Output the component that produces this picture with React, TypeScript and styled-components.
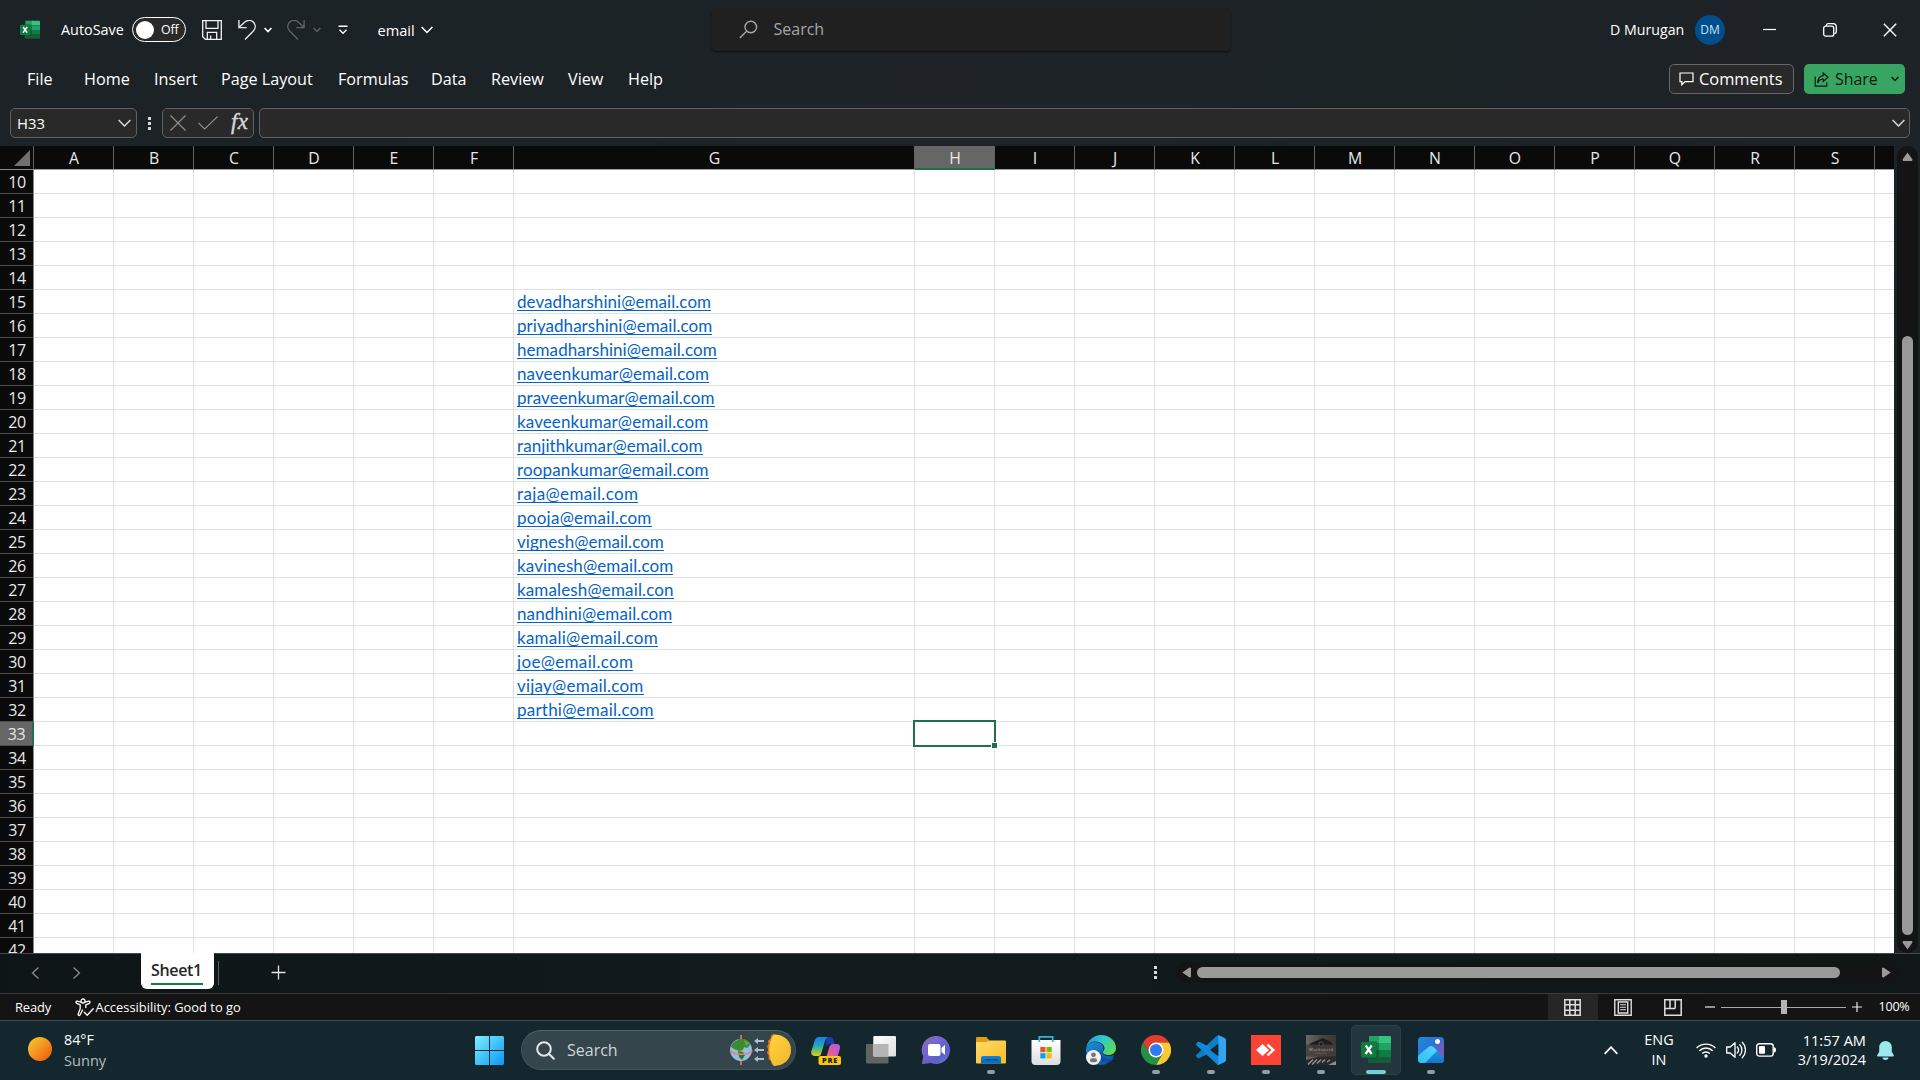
import React from "react";
import styled, { createGlobalStyle, css } from "styled-components";

const UI = `"Open Sans", "Noto Sans", sans-serif`;

const GlobalStyle = createGlobalStyle`
  * { box-sizing: border-box; }
  body { margin: 0; background: #1b2225; overflow: hidden; font-family: ${UI}; }
  svg { display: block; flex: none; }
`;

const Screen = styled.div`
  width: 1920px;
  height: 1080px;
  display: flex;
  flex-direction: column;
  overflow: hidden;
  background: linear-gradient(100deg, #1c2225 0%, #1b2326 28%, #1f2328 45%, #1b2325 68%, #1e2227 82%, #1b2325 100%);
`;

const Label = styled.span<{ $size?: number; $color?: string; $ls?: number; $weight?: number }>`
  font-size: ${(p) => p.$size ?? 14.4}px;
  color: ${(p) => p.$color ?? "#fff"};
  letter-spacing: ${(p) => p.$ls ?? 0}px;
  font-weight: ${(p) => p.$weight ?? 400};
  line-height: 20px;
  white-space: nowrap;
`;

/* Holds one control of a bar: fixed width, with the gap before it */
const Slot = styled.div<{ $w: number; $gap?: number; $center?: boolean }>`
  flex: none;
  width: ${(p) => p.$w}px;
  margin-left: ${(p) => p.$gap ?? 0}px;
  display: flex;
  align-items: center;
  justify-content: ${(p) => (p.$center ? "center" : "flex-start")};
`;

/* ---------- Title bar ---------- */
const TitleBar = styled.header`
  height: 60px;
  flex: none;
  display: flex;
  align-items: center;
  padding-left: 20px;
`;
const Toggle = styled.div`
  width: 54px;
  height: 25px;
  margin-bottom: 1px;
  border: 1px solid #fff;
  border-radius: 13px;
  background: #292929;
  display: flex;
  align-items: center;
  gap: 7px;
  padding-left: 3px;
`;
const Knob = styled.i`
  width: 18px;
  height: 18px;
  border-radius: 50%;
  background: #fff;
`;
const SearchBox = styled.div`
  width: 518px;
  height: 42px;
  margin-left: 279px;
  border-radius: 4px;
  background: #202020;
  box-shadow: 0 1px 2px #0b0f10;
  display: flex;
  align-items: center;
  padding: 0 0 2px 27px;
  gap: 16px;
`;
const Avatar = styled.div`
  width: 30px;
  height: 30px;
  border-radius: 50%;
  background: #004e8c;
  display: grid;
  place-items: center;
`;

/* ---------- Ribbon tabs ---------- */
const TabRow = styled.nav`
  height: 48px;
  flex: none;
  display: flex;
  padding-left: 27px;
`;
const Tab = styled.div<{ $w: number }>`
  width: ${(p) => p.$w}px;
  height: 40px;
  padding-top: 8px;
`;
const Actions = styled.div`
  margin-left: auto;
  padding: 4px 15px 0 0;
  display: flex;
  gap: 10px;
`;
const ActionButton = styled.div<{ $primary?: boolean }>`
  height: 30px;
  border-radius: 5px;
  display: flex;
  align-items: center;
  ${(p) =>
    p.$primary
      ? css`
          width: 101px;
          background: #38a662;
          padding-left: 10px;
          gap: 6px;
        `
      : css`
          width: 125px;
          background: #292929;
          border: 1px solid #666;
          padding-left: 9px;
          gap: 5px;
        `}
`;

/* ---------- Formula bar ---------- */
const FormulaRow = styled.div`
  height: 38px;
  flex: none;
  display: flex;
  align-items: flex-start;
  padding-left: 10px;
`;
const Field = styled.div<{ $w: number; $gap?: number }>`
  width: ${(p) => p.$w}px;
  height: 30px;
  margin-left: ${(p) => p.$gap ?? 0}px;
  border: 1px solid #616161;
  border-radius: 5px;
  background: #292929;
  display: flex;
  align-items: center;
`;
const DotsSlot = styled.div`
  width: 25px;
  height: 31px;
  display: grid;
  place-items: center;
`;
const Dots = styled.div`
  width: 3px;
  display: flex;
  flex-direction: column;
  gap: 2px;
`;
const Dot = styled.i`
  width: 3px;
  height: 3px;
  background: #d8d8d8;
`;
const FxMark = styled.span`
  font: italic 400 23px/24px "Liberation Serif", serif;
  -webkit-text-stroke: 0.4px #d6d6d6;
  letter-spacing: 0.4px;
  color: #d6d6d6;
  padding-bottom: 2px;
`;

/* ---------- Worksheet ---------- */
const SheetArea = styled.main`
  height: 807px;
  flex: none;
  display: flex;
`;
const Grid = styled.div`
  position: relative;
  width: 1894px;
  height: 807px;
  overflow: hidden;
  background: #fff;
`;
const GridRow = styled.div<{ $h: number }>`
  display: flex;
  width: 2000px;
  height: ${(p) => p.$h}px;
`;
const Corner = styled.div`
  width: 34px;
  height: 24px;
  background: #0a0a0a;
  border-right: 1px solid #616161;
  border-bottom: 1px solid #8a8a8a;
  display: flex;
  padding: 4px 0 0 14px;
`;
const ColHead = styled.div<{ $w: number; $on?: boolean }>`
  flex: none;
  width: ${(p) => p.$w}px;
  padding-left: 1px;
  background: ${(p) => (p.$on ? "#666" : "#0a0a0a")};
  border-right: 1px solid #616161;
  border-bottom: ${(p) => (p.$on ? "2px solid #1e7145" : "1px solid #a0a0a0")};
  color: #e8e8e8;
  font-size: 15.8px;
  line-height: 24px;
  text-align: center;
`;
const RowHead = styled.div<{ $on?: boolean }>`
  flex: none;
  width: 34px;
  background: ${(p) => (p.$on ? "#666" : "#0a0a0a")};
  border-right: ${(p) => (p.$on ? "2px solid #1e7145" : "1px solid #8a8a8a")};
  border-bottom: 1px solid #4d4d4d;
  padding-left: 1px;
  color: #e8e8e8;
  font-size: 16px;
  letter-spacing: -0.3px;
  line-height: 24px;
  text-align: center;
`;
const Cell = styled.div<{ $w: number }>`
  flex: none;
  width: ${(p) => p.$w}px;
  border-right: 1px solid #e0e0e0;
  border-bottom: 1px solid #e0e0e0;
  padding-left: 3px;
`;
const Mail = styled.div<{ $ls: number }>`
  width: fit-content;
  height: 21px;
  border-bottom: 1px solid #0563c1;
  color: #0563c1;
  font: 400 17px/24px Lato, sans-serif;
  letter-spacing: ${(p) => p.$ls}px;
  white-space: nowrap;
`;
/* Selection frame over the active cell */
const Selection = styled.div`
  position: absolute;
  left: 913px;
  top: 574px;
  width: 83px;
  height: 27px;
  border: 2px solid #1e7145;
`;
const FillHandle = styled.i`
  position: absolute;
  right: -4px;
  bottom: -4px;
  width: 7px;
  height: 7px;
  border: 1px solid #fff;
  background: #1e7145;
`;
const VScroll = styled.div`
  width: 21px;
  height: 807px;
  margin-left: 3px;
  border-radius: 10px;
  background: #141414;
  display: flex;
  flex-direction: column;
  align-items: center;
  padding-top: 6px;
`;
const VThumb = styled.div`
  width: 11px;
  height: 599px;
  margin: 175px 0 6px;
  border-radius: 6px;
  background: #999;
`;

/* ---------- Sheet tabs ---------- */
const SheetBar = styled.div`
  height: 41px;
  flex: none;
  border-top: 1px solid #484848;
  border-bottom: 1px solid #3a3a3a;
  background: linear-gradient(90deg, #0d1517, #111a1c 40%, #10191b 75%, #101716);
  display: flex;
  align-items: center;
  padding: 0 0 2px 30px;
`;
const SheetTab = styled.div`
  width: 73px;
  height: 36px;
  margin: -1px 0 0 60px;
  align-self: flex-start;
  border-radius: 0 0 6px 6px;
  background: #fff;
  padding: 5px 10px 0;
`;
const SheetName = styled.div`
  width: 52px;
  height: 27px;
  border-bottom: 2px solid #107c41;
  color: #262626;
  font-size: 16px;
  font-weight: 600;
  letter-spacing: -0.35px;
  line-height: 24px;
  white-space: nowrap;
`;
const TabDivider = styled.i`
  width: 1px;
  height: 24px;
  margin-left: 4px;
  background: #5a5a5a;
`;
const HScroll = styled.div`
  width: 722px;
  height: 21px;
  margin-left: 18px;
  border-radius: 10px;
  background: #141414;
  display: flex;
  align-items: center;
  padding-left: 6px;
`;
const HThumb = styled.div`
  width: 643px;
  height: 11px;
  margin: 0 42px 0 6px;
  border-radius: 6px;
  background: #999;
`;

/* ---------- Status bar ---------- */
const StatusBar = styled.div`
  height: 26px;
  flex: none;
  background: #141414;
  display: flex;
  align-items: center;
  padding-left: 15px;
`;
const ViewButton = styled.div<{ $on?: boolean }>`
  width: 50px;
  height: 26px;
  display: grid;
  place-items: center;
  background: ${(p) => (p.$on ? "#262626" : "transparent")};
`;
const ZoomTrack = styled.div`
  width: 125px;
  height: 14px;
  margin: 0 6px;
  display: flex;
  justify-content: center;
  background: linear-gradient(#a8a8a8, #a8a8a8) 0 7px / 100% 1px no-repeat;
`;
const ZoomThumb = styled.i`
  width: 6px;
  height: 14px;
  background: #b3b3b3;
`;

/* ---------- Taskbar ---------- */
const Taskbar = styled.footer`
  height: 60px;
  flex: none;
  border-top: 1px solid #3b4a50;
  background: #14272e;
  display: flex;
  align-items: center;
  padding-bottom: 1px;
`;
const Sun = styled.i`
  width: 24px;
  height: 24px;
  margin-left: 28px;
  margin-bottom: 2px;
  border-radius: 50%;
  background: linear-gradient(135deg, #f2c530 5%, #f39a22 45%, #ee6010 90%);
`;
const TwoLines = styled.div<{ $w: number; $gap: number; $align?: string }>`
  width: ${(p) => p.$w}px;
  margin-left: ${(p) => p.$gap}px;
  padding-bottom: 1px;
  display: flex;
  flex-direction: column;
  align-items: ${(p) => p.$align ?? "flex-start"};
`;
const TaskSearch = styled.div`
  width: 275px;
  height: 40px;
  margin-left: 17px;
  border: 1px solid #43545a;
  border-top-color: #54656a;
  border-radius: 20px;
  background: #34464c;
  display: flex;
  align-items: center;
  padding-left: 14px;
`;
const AppRow = styled.div`
  display: flex;
  gap: 5px;
  margin-left: 5px;
`;
const AppSlot = styled.div<{ $active?: boolean }>`
  width: 50px;
  height: 50px;
  border-radius: 5px;
  display: flex;
  flex-direction: column;
  align-items: center;
  padding-top: 10px;
  background: ${(p) => (p.$active ? "#24363d" : "transparent")};
  box-shadow: ${(p) => (p.$active ? "inset 0 0 0 1px #2e4047" : "none")};
`;
const Indicator = styled.i<{ $active?: boolean }>`
  width: ${(p) => (p.$active ? 20 : 8)}px;
  height: 4px;
  margin-top: 5px;
  border-radius: 2px;
  background: ${(p) => (p.$active ? "#6fd0d9" : "#959da0")};
`;

/* ---------- Icons ---------- */
const Chevron = ({ w = 12, color = "#fff", sw = 1.3, up = false }: { w?: number; color?: string; sw?: number; up?: boolean }) => (
  <svg width={w} height={w / 2 + 2} viewBox={`0 0 ${w} ${w / 2 + 2}`} fill="none" stroke={color} strokeWidth={sw}>
    <path d={up ? `M.6 ${w / 2 + 0.8}L${w / 2} 1.2L${w - 0.6} ${w / 2 + 0.8}` : `M.6 1L${w / 2} ${w / 2 + 0.5}L${w - 0.6} 1`} />
  </svg>
);

const ExcelIcon = ({ size = 30 }: { size?: number }) => (
  <svg width={size} height={size} viewBox="0 0 30 30">
    <path d="M8 1h11v7H8z" fill="#21a366" />
    <path d="M18 1h11a1 1 0 0 1 1 1v6H18z" fill="#33c481" />
    <path d="M7 8h11v7H7z" fill="#107c41" />
    <path d="M18 8h12v7H18z" fill="#21a366" />
    <path d="M7 15h11v7H7z" fill="#185c37" />
    <path d="M18 15h12v7H18z" fill="#107c41" />
    <path d="M7 22h23v5a1 1 0 0 1-1 1H8a1 1 0 0 1-1-1z" fill="#185c37" />
    <path d="M7 6h9v18H7z" fill="#0b4a28" opacity=".35" />
    <rect x="0" y="7" width="15.5" height="15.500" rx="1.4" fill="#107c41" />
    <path d="M4.700 10.500l6 8.500M10.700 10.500l-6.200 8.500" stroke="#fff" strokeWidth="2.2" fill="none" />
  </svg>
);

const SaveIcon = () => (
  <svg width="20" height="20" viewBox="0 0 20 20" fill="none" stroke="#f2f2f2" strokeWidth="1.3">
    <path d="M.7.7h18.6v18.6H3.4L.7 16.8z" />
    <path d="M4 .7v7.6h12V.7M5.3 19v-6.6h9.4V19M8.6 19v-3.6" />
  </svg>
);
const UndoIcon = ({ color, flip }: { color: string; flip?: boolean }) => (
  <svg width="19" height="20" viewBox="0 0 19 20" fill="none" stroke={color} strokeWidth="1.4">
    <path transform={flip ? "matrix(-1 0 0 1 19 0)" : undefined} d="M.9 0v7.6h7.8M1.2 7.3l5.6-5.2a6.2 6.2 0 0 1 9.1.6 6.2 6.2 0 0 1-.3 8L7 19.4" />
  </svg>
);

const CopilotIcon = () => (
  <svg width="30" height="30" viewBox="0 0 30 30">
    <defs>
      <linearGradient id="cp1" x1="0" y1="0" x2="0" y2="1">
        <stop offset="0" stopColor="#1b7fe0" />
        <stop offset=".45" stopColor="#22a6c8" />
        <stop offset=".75" stopColor="#7cc255" />
        <stop offset="1" stopColor="#f2c51a" />
      </linearGradient>
      <linearGradient id="cp2" x1="1" y1="0" x2="0" y2="1">
        <stop offset="0" stopColor="#a65ae8" />
        <stop offset=".5" stopColor="#e55a9e" />
        <stop offset="1" stopColor="#fb8b4a" />
      </linearGradient>
    </defs>
    <path d="M15 2h4c2 0 3 1.2 3.600 3.400L23.500 9H19c-2 0-3 1-3.600 3z" fill="#173fae" />
    <path d="M8 2h9c-1.800.7-2.400 2-3 4l-4 13c-.5 1.700-1.600 2-3 2H4c-3 0-4.400-2-3.600-5L3.600 6C4.400 3.300 5.600 2 8 2z" fill="url(#cp1)" />
    <path d="M22 9h3.500c3 0 4.100 2 3.300 5l-2.400 8c-.8 2.600-2.400 4-5 4H12c2-.5 2.800-2 3.400-4l3-10c.6-2 1.600-3 3.600-3z" fill="url(#cp2)" />
    <rect x="7.500" y="21" width="22.500" height="9" rx="2" fill="#fdc70c" />
    <text x="19.100" y="28.300" fontSize="7.400" fontWeight="800" fontFamily={UI} letterSpacing=".9" textAnchor="middle" fill="#1a1a1a">PRE</text>
  </svg>
);
const TaskViewIcon = () => (
  <svg width="30" height="30" viewBox="0 0 30 30">
    <defs>
      <linearGradient id="tv" x1="0" y1="0" x2="1" y2="1"><stop offset="0" stopColor="#fff" /><stop offset="1" stopColor="#dedede" /></linearGradient>
    </defs>
    <rect x="0" y="9" width="22.500" height="19.500" rx="1" fill="#626463" />
    <rect x="7.300" y="1" width="22.700" height="20.500" rx="1" fill="url(#tv)" />
    <path d="M7.300 9h15.200v12.500H8.300a1 1 0 0 1-1-1z" fill="#b5b5b5" />
  </svg>
);
const ChatIcon = () => (
  <svg width="30" height="30" viewBox="0 0 30 30">
    <defs>
      <linearGradient id="ch" x1="0" y1="0" x2="1" y2="1"><stop offset="0" stopColor="#a06a9e" /><stop offset=".35" stopColor="#7068cf" /><stop offset=".7" stopColor="#5b5fc7" /><stop offset="1" stopColor="#6f78e0" /></linearGradient>
    </defs>
    <path d="M15 1a14 14 0 1 1-5.200 27L2 29c-.8.100-1.200-.4-1-1.200l1.300-6.200A14 14 0 0 1 15 1z" fill="url(#ch)" />
    <rect x="7" y="9" width="12.500" height="12" rx="2" fill="#fff" />
    <path d="M20.500 13l3.500-3v10l-3.500-3z" fill="#fff" />
  </svg>
);
const FolderIcon = () => (
  <svg width="30" height="30" viewBox="0 0 30 30">
    <defs>
      <linearGradient id="fo" x1="0" y1="0" x2="1" y2="1"><stop offset="0" stopColor="#ffdc6c" /><stop offset="1" stopColor="#f9bb20" /></linearGradient>
      <linearGradient id="fb" x1="0" y1="0" x2="0" y2="1"><stop offset="0" stopColor="#1583dc" /><stop offset="1" stopColor="#0a68b8" /></linearGradient>
    </defs>
    <path d="M0 3.200C0 2.500.5 2 1.200 2h9.200l3 3.600L10 8H0z" fill="#e09d10" />
    <path d="M0 7h10l3.500-1.600H29a1 1 0 0 1 1 1V27.500a1 1 0 0 1-1 1H1a1 1 0 0 1-1-1z" fill="url(#fo)" />
    <path d="M5 28.500v-5.300c0-1.400.8-2.200 2.200-2.200h15.600c1.400 0 2.200.8 2.200 2.200v5.300z" fill="url(#fb)" />
    <path d="M8.500 24.800h13" stroke="#074a8c" strokeWidth="1.200" />
  </svg>
);
const StoreIcon = () => (
  <svg width="30" height="30" viewBox="0 0 30 30">
    <defs><linearGradient id="st" x1="0" y1="0" x2="0" y2="1"><stop offset="0" stopColor="#fff" /><stop offset="1" stopColor="#dcdedf" /></linearGradient></defs>
    <path d="M.500 5h29v21a4 4 0 0 1-4 4h-21a4 4 0 0 1-4-4z" fill="url(#st)" />
    <path d="M8.300 7V1.800h13.400V7" fill="none" stroke="#2fb3e8" strokeWidth="1.700" />
    <path d="M9.300 12h5.200v5.200H9.300z" fill="#f25022" /><path d="M15.500 12h5.200v5.200h-5.200z" fill="#7fba00" />
    <path d="M9.300 18.200h5.200v5.200H9.300z" fill="#00a4ef" /><path d="M15.500 18.200h5.200v5.200h-5.200z" fill="#ffb900" />
  </svg>
);
const EdgeIcon = () => (
  <svg width="30" height="30" viewBox="0 0 30 30">
    <defs>
      <linearGradient id="ed1" x1="0" y1=".2" x2="1" y2=".6"><stop offset="0" stopColor="#1f97dc" /><stop offset=".45" stopColor="#33c3d4" /><stop offset="1" stopColor="#5ade52" /></linearGradient>
      <linearGradient id="ed2" x1="0" y1="0" x2="1" y2="1"><stop offset="0" stopColor="#1b8fd8" /><stop offset="1" stopColor="#0c4f9c" /></linearGradient>
    </defs>
    <path d="M0 14c1-5 5-7 9-7 5 0 8.500 3 8.500 6 0 2-1.200 2.700-1.200 4.200 0 3.500 7 5.300 12 2.600C26 26 21 30 15 30 7 30-.5 24 0 14z" fill="url(#ed2)" />
    <path d="M10 15c-1 7 4 12.500 11 12.500 3 0 6-2 7.300-4.700-5 2.700-13 .7-13-5.200z" fill="#0d4ea3" />
    <path d="M.2 13C1.300 5.500 7.500 0 15 0c8.500 0 15 6 15 13 0 4.500-3.500 7-7.200 7-3.400 0-6-1.300-6-2.700 0-1 1.700-1.600 1.700-4C18.500 9.500 14 6.500 9.500 6.500 5 6.500 1.500 9 .2 13z" fill="url(#ed1)" />
    <circle cx="7.500" cy="22.500" r="7.500" fill="#f1f1f1" />
    <circle cx="7.500" cy="19.800" r="2.400" fill="#767676" /><rect x="4" y="23.200" width="7" height="4" rx="2" fill="#767676" />
  </svg>
);
const ChromeIcon = () => (
  <svg width="30" height="30" viewBox="0 0 30 30">
    <path d="M2 7.500A15 15 0 0 1 28 7.500H15L8.500 18.700z" fill="#e33b2e" />
    <path d="M28 7.500A15 15 0 0 1 15 30l6.500-11.300L15 7.500z" fill="#fcc934" />
    <path d="M2 7.500A15 15 0 0 0 15 30l6.500-11.300h-13z" fill="#229342" />
    <circle cx="15" cy="15" r="7.500" fill="#fff" /><circle cx="15" cy="15" r="6" fill="#2f7bed" />
  </svg>
);
const CodeIcon = () => (
  <svg width="30" height="30" viewBox="0 0 30 30">
    <path d="M22.500.3L28.500 3a2 2 0 0 1 1.300 2v5L3.600 23a1.600 1.600 0 0 1-2-.1L.4 21.600a1.300 1.300 0 0 1 0-1.900L21 .7z" fill="#0d7dc6" />
    <path d="M22.500 29.700l6-2.700a2 2 0 0 0 1.300-2v-5L3.600 7a1.600 1.600 0 0 0-2 .1L.4 8.400a1.300 1.300 0 0 0 0 1.900L21 29.300z" fill="#1289d6" />
    <path d="M22 0l6.600 3A2.300 2.300 0 0 1 30 5.100v19.800a2.300 2.300 0 0 1-1.400 2.100L22 30c-.9.300-1.500-.2-1.500-.2 1 .4 1.800-.3 1.800-1.300V1.500C22.300.5 21.500-.2 20.500.2c0 0 .6-.5 1.500-.2z" fill="#2fa5f3" />
    <path d="M22.300 8.800L13.900 15l8.400 6.200z" fill="#14272e" />
  </svg>
);
const AnyDeskIcon = () => (
  <svg width="30" height="30" viewBox="0 0 30 30">
    <rect width="30" height="30" fill="#fd4236" />
    <path d="M5 15l6.500-6 6.500 6-6.500 6z" fill="#fff" />
    <path d="M16.500 9.600l5.700 5.400-5.700 5.400" fill="none" stroke="#fff" strokeWidth="2.500" />
  </svg>
);
const PhotoTile = () => (
  <svg width="30" height="30" viewBox="0 0 30 30">
    <defs><linearGradient id="ph" x1="0" y1="0" x2="1" y2="0"><stop offset="0" stopColor="#6b6967" /><stop offset=".5" stopColor="#4a4644" /><stop offset="1" stopColor="#393635" /></linearGradient></defs>
    <rect width="30" height="30" fill="url(#ph)" />
    <path d="M3 9L17 3l8 4 2 3-6 2-12 2z" fill="#1f1e1e" />
    <rect y="9.500" width="30" height="12" fill="#453d3a" opacity=".8" />
    <circle cx="15" cy="9" r="2.200" fill="#1c1b1b" stroke="#777" strokeWidth=".6" />
    <text x="15.200" y="16.400" fontSize="4" fontFamily={UI} textAnchor="middle" letterSpacing=".5" fill="#b5afab">Workspaid</text>
    <path d="M9 18.200h12" stroke="#7a736f" strokeWidth=".5" />
    <path d="M0 30v-5l14-3.500h16V30z" fill="#2b2a2a" />
    <path d="M2 29.500l5-5M6 29.500l5-5M11 28.500l4-4M16 27.500l3-3M21 27l3-2" stroke="#969594" strokeWidth="1.300" />
    <path d="M22 30l8-4v4z" fill="#8d8b8a" />
  </svg>
);
const PhotosIcon = () => (
  <svg width="30" height="30" viewBox="0 0 30 30">
    <defs>
      <linearGradient id="pp1" x1="0" y1="0" x2="1" y2=".8"><stop offset="0" stopColor="#1c8ae0" /><stop offset=".5" stopColor="#2c73d2" /><stop offset="1" stopColor="#a04fb4" /></linearGradient>
      <linearGradient id="pp2" x1="0" y1="1" x2="1" y2="0"><stop offset="0" stopColor="#2fb9f0" /><stop offset="1" stopColor="#56d8fd" /></linearGradient>
      <linearGradient id="pp3" x1="0" y1="0" x2="0" y2="1"><stop offset="0" stopColor="#1ea0ec" /><stop offset="1" stopColor="#0f74cc" /></linearGradient>
      <clipPath id="ppc"><rect x="2" y="2" width="26" height="26" rx="3.500" /></clipPath>
    </defs>
    <g clipPath="url(#ppc)">
      <rect x="2" y="2" width="26" height="26" fill="url(#pp1)" />
      <path d="M12.500 12.300c1.500-1.400 3.500-1.400 5 0L29 23.500V29H3z" fill="url(#pp3)" />
      <path d="M0 22.500L12.500 12c1.600-1.300 3.400-1.300 5 .1l3.700 3.600L8 29H0z" fill="url(#pp2)" />
    </g>
    <circle cx="21.500" cy="6.600" r="2.500" fill="#f4f6ff" />
  </svg>
);
const EarthSun = () => (
  <svg width="64" height="34" viewBox="0 0 64 34">
    <defs><linearGradient id="sn" x1="0" y1="0" x2="1" y2="1"><stop offset="0" stopColor="#ffd640" /><stop offset="1" stopColor="#f0b429" /></linearGradient></defs>
    <path d="M12 2v30" stroke="#e8705a" strokeWidth="1.300" />
    <circle cx="12" cy="17" r="11" fill="#8fbfe6" />
    <path d="M7 8c4-3 8-3 12 0l2 4-3 3-3-1-1 3-4 1-5-2-3-2c0-2 2-5 5-6z" fill="#3f8a2c" />
    <path d="M9 18l5 1 2 3-3 5-3-3z" fill="#35751f" /><path d="M15 7l5 3-3 3z" fill="#64ac3c" />
    <path d="M1 17.500c4 5 18 5 22.500 0" fill="none" stroke="#e8836a" strokeWidth="1.500" />
    <path d="M12 2v4M12 28v4" stroke="#e8705a" strokeWidth="1.300" />
    <g fill="#a9bdd6">
      <path d="M25 8l4-3v2h6v2h-6v2zM25 17l4-3v2h6v2h-6v2zM25 26l4-3v2h6v2h-6v2z" />
    </g>
    <path d="M45 .5l-3 2.200-.5 3-2.500 2 .5 3L38 13.500l1.200 3L38 20l1.700 2.600L39.500 26l2.500 2 .8 3 3 2.500z" fill="#e9771d" />
    <path d="M45 1.500c10 0 17 6 17 15.500s-7 15.500-17 16c-3-4-4.700-9-4.700-15.500S42 5 45 1.500z" fill="url(#sn)" />
  </svg>
);

/* ---------- Data ---------- */
const tabs: [string, number][] = [
  ["File", 57], ["Home", 70], ["Insert", 67], ["Page Layout", 117], ["Formulas", 93],
  ["Data", 60], ["Review", 77], ["View", 60], ["Help", 50],
];
const columns: [string, number][] = "ABCDEFGHIJKLMNOPQRST".split("").map((c) => [c === "T" ? "" : c, c === "G" ? 401 : 80]);
const rows = Array.from({ length: 33 }, (_, i) => i + 10);
/* address and its tracking */
const mails: [string, number][] = [
  ["devadharshini@email.com", 0.06], ["priyadharshini@email.com", 0.04], ["hemadharshini@email.com", 0.06],
  ["naveenkumar@email.com", 0.11], ["praveenkumar@email.com", 0.08], ["kaveenkumar@email.com", 0.11],
  ["ranjithkumar@email.com", 0.08], ["roopankumar@email.com", 0.14], ["raja@email.com", 0.36],
  ["pooja@email.com", 0.26], ["vignesh@email.com", 0.03], ["kavinesh@email.com", 0.11],
  ["kamalesh@email.con", 0.14], ["nandhini@email.com", 0.11], ["kamali@email.com", 0.25],
  ["joe@email.com", 0.33], ["vijay@email.com", 0.22], ["parthi@email.com", 0.22],
];
const apps: { icon: React.ReactNode; running?: boolean; active?: boolean }[] = [
  { icon: <CopilotIcon /> },
  { icon: <TaskViewIcon /> },
  { icon: <ChatIcon /> },
  { icon: <FolderIcon />, running: true },
  { icon: <StoreIcon /> },
  { icon: <EdgeIcon /> },
  { icon: <ChromeIcon />, running: true },
  { icon: <CodeIcon />, running: true },
  { icon: <AnyDeskIcon />, running: true },
  { icon: <PhotoTile />, running: true },
  { icon: <ExcelIcon />, running: true, active: true },
  { icon: <PhotosIcon />, running: true },
];

const ThreeDots = () => (<Dots><Dot /><Dot /><Dot /></Dots>);

const GridCell = ({ col, row, w }: { col: string; row: number; w: number }) => {
  const mail = col === "G" ? mails[row - 15] : undefined;
  return <Cell $w={w}>{mail && <Mail $ls={mail[1]}>{mail[0]}</Mail>}</Cell>;
};

export default function App() {
  return (
    <Screen>
      <GlobalStyle />
      <TitleBar>
        <ExcelIcon size={20} />
        <Slot $w={71} $gap={21}><Label>AutoSave</Label></Slot>
        <Toggle><Knob /><Label $size={12.400} $ls={-0.1}>Off</Label></Toggle>
        <Slot $w={20} $gap={16}><SaveIcon /></Slot>
        <Slot $w={19} $gap={16}><UndoIcon color="#e6e6e6" /></Slot>
        <Slot $w={9} $gap={7}><Chevron w={8} sw={1.600} /></Slot>
        <Slot $w={19} $gap={13}><UndoIcon color="#5c6265" flip /></Slot>
        <Slot $w={9} $gap={8}><Chevron w={8} color="#5c6265" sw={1.500} /></Slot>
        <Slot $w={10} $gap={16}>
          <svg width="10" height="10" viewBox="0 0 10 10" fill="none" stroke="#fff" strokeWidth="1.400"><path d="M.5 1.200h9M1.500 4.800l3.500 3.500 3.500-3.500" /></svg>
        </Slot>
        <Slot $w={43} $gap={29.500}><Label $size={14.600}>email</Label></Slot>
        <Chevron w={12} sw={1.500} />
        <SearchBox>
          <svg width="19" height="19" viewBox="0 0 19 19" fill="none" stroke="#a6a6a6" strokeWidth="1.400"><circle cx="11.800" cy="7" r="5.800" /><path d="M7.600 11.200L.8 18" /></svg>
          <Label $size={16} $color="#a6a6a6">Search</Label>
        </SearchBox>
        <Slot $w={85} $gap={380.500}><Label $size={14.200}>D Murugan</Label></Slot>
        <Avatar><Label $size={12} $color="#c9e2f7">DM</Label></Avatar>
        <Slot $w={14} $gap={38}><svg width="14" height="14" viewBox="0 0 14 14"><path d="M0 6.500h13" stroke="#fff" strokeWidth="1.200" /></svg></Slot>
        <Slot $w={14} $gap={46}>
          <svg width="14" height="14" viewBox="0 0 14 14" fill="none" stroke="#fff" strokeWidth="1.300"><rect x=".7" y="3.200" width="10" height="10" rx="2" /><path d="M3.200 3V2.600c.2-1.200 1-1.900 2.200-1.900H10a3.300 3.300 0 0 1 3.300 3.300v4.600c0 1.200-.8 2-1.900 2.200" /></svg>
        </Slot>
        <Slot $w={14} $gap={46}><svg width="14" height="14" viewBox="0 0 14 14" stroke="#fff" strokeWidth="1.400"><path d="M.8.800l12.400 12.400M13.200.8L.8 13.200" /></svg></Slot>
      </TitleBar>

      <TabRow>
        {tabs.map(([name, w]) => (<Tab key={name} $w={w}><Label $size={16.200}>{name}</Label></Tab>))}
        <Actions>
          <ActionButton>
            <svg width="15" height="14" viewBox="0 0 15 14" fill="none" stroke="#fff" strokeWidth="1.200"><path d="M1 1h13v8.600H6.200L2.800 12.800V9.600H1z" /></svg>
            <Label $size={16.400}>Comments</Label>
          </ActionButton>
          <ActionButton $primary>
            <svg width="15" height="15" viewBox="0 0 15 15" fill="none" stroke="#0a1a10" strokeWidth="1.200"><path d="M1.200 4.500v9.700h11.600v-4M9.200 1l4.800 4.200-4.800 4.200V7C6 7 4.600 8.500 3.800 11c0-4 1.800-7 5.400-7.300z" /></svg>
            <Label $size={15.900} $color="#0a1a10">Share</Label>
            <Slot $w={8} $gap={7}><Chevron w={8} color="#0a1a10" sw={1.500} /></Slot>
          </ActionButton>
        </Actions>
      </TabRow>

      <FormulaRow>
        <Field $w={127}>
          <Slot $w={100.500} $gap={6}><Label $size={14.900}>H33</Label></Slot>
          <Chevron w={13} color="#d6d6d6" sw={1.500} />
        </Field>
        <DotsSlot><ThreeDots /></DotsSlot>
        <Field $w={92}>
          <Slot $w={16} $gap={7}><svg width="16" height="16" viewBox="0 0 16 16" stroke="#8f8f8f" strokeWidth="1.200"><path d="M.5.5l15 15M15.500.5l-15 15" /></svg></Slot>
          <Slot $w={20} $gap={12}><svg width="20" height="14" viewBox="0 0 20 14" fill="none" stroke="#8f8f8f" strokeWidth="1.200"><path d="M.5 6.800l6.200 6.200L19.500.6" /></svg></Slot>
          <Slot $w={20} $gap={13}><FxMark>fx</FxMark></Slot>
        </Field>
        <Field $w={1651} $gap={5}>
          <Slot $w={13} $gap={1631.500}><Chevron w={13} color="#d6d6d6" sw={1.500} /></Slot>
        </Field>
      </FormulaRow>

      <SheetArea>
        <Grid>
          <GridRow $h={24}>
            <Corner><svg width="16" height="16" viewBox="0 0 16 16"><path d="M16 0v16H0z" fill="#707070" /></svg></Corner>
            {columns.map(([c, w], i) => (<ColHead key={i} $w={w} $on={c === "H"}>{c}</ColHead>))}
          </GridRow>
          {rows.map((r) => (
            <GridRow key={r} $h={24}>
              <RowHead $on={r === 33}>{r}</RowHead>
              {columns.map(([c, w], i) => (<GridCell key={i} col={c} row={r} w={w} />))}
            </GridRow>
          ))}
          <Selection><FillHandle /></Selection>
        </Grid>
        <VScroll>
          <svg width="11" height="9" viewBox="0 0 11 9"><path d="M5.500.5L10.500 7.500 10 9H1L.5 7.500z" fill="#999" /></svg>
          <VThumb />
          <svg width="11" height="9" viewBox="0 0 11 9"><path d="M5.500 8.500L.5 1.500 1 0h9l.5 1.500z" fill="#999" /></svg>
        </VScroll>
      </SheetArea>

      <SheetBar>
        <Slot $w={12}><svg width="12" height="12" viewBox="0 0 12 12" fill="none" stroke="#8c8c8c" strokeWidth="1.300"><path d="M8.500.5L2.500 6l6 5.500" /></svg></Slot>
        <Slot $w={12} $gap={27}><svg width="12" height="12" viewBox="0 0 12 12" fill="none" stroke="#8c8c8c" strokeWidth="1.300"><path d="M4.500.5l6 5.500-6 5.500" /></svg></Slot>
        <SheetTab><SheetName>Sheet1</SheetName></SheetTab>
        <TabDivider />
        <Slot $w={15} $gap={52}><svg width="15" height="15" viewBox="0 0 15 15" stroke="#e6e6e6" strokeWidth="1.300"><path d="M7.500.5v14M.5 7.500h14" /></svg></Slot>
        <Slot $w={4} $gap={868}><ThreeDots /></Slot>
        <HScroll>
          <svg width="9" height="11" viewBox="0 0 9 11"><path d="M.3 5.500L7.500.5 9 1v9l-1.500.5z" fill="#999" /></svg>
          <HThumb />
          <svg width="9" height="11" viewBox="0 0 9 11"><path d="M8.700 5.500L1.500.5 0 1v9l1.500.5z" fill="#999" /></svg>
        </HScroll>
      </SheetBar>

      <StatusBar>
        <Slot $w={60}><Label $size={12.900} $ls={-0.1}>Ready</Label></Slot>
        <Slot $w={20}>
          <svg width="19" height="19" viewBox="0 0 19 19" fill="none" stroke="#fff" strokeWidth="1.300" strokeLinecap="round" strokeLinejoin="round">
            <circle cx="8" cy="3" r="2" />
            <path d="M6 4.200L2.200 3.200C.8 3 .6 4.800 1.700 5.300L5.200 6.800v4L3.200 16c-.3 1.400 1.400 2 2 .8L7.500 12M10 4.200l3.800-1c1.400-.2 1.600 1.600.5 2.100L10.800 6.800v2.700M9.300 14.200l2.900 3 6-6.400" />
          </svg>
        </Slot>
        <Slot $w={1452} $gap={0.500}><Label $size={12.900}>Accessibility: Good to go</Label></Slot>
        <ViewButton $on>
          <svg width="17" height="17" viewBox="0 0 17 17" fill="none" stroke="#dedede" strokeWidth="1.500"><path d="M.8.8h15.400v15.400H.8zM5.800.8v15.400M11.200.8v15.400M.8 5.800h15.400M.8 11.200h15.400" /></svg>
        </ViewButton>
        <ViewButton>
          <svg width="18" height="17" viewBox="0 0 18 17" fill="none" stroke="#dedede" strokeWidth="1.400"><path d="M.8.8h16.400v15.400H.8zM4.300 3h9.400v11H4.300z" /><path d="M6 5.800h6M6 8.300h6M6 10.800h6" strokeWidth="1.100" /></svg>
        </ViewButton>
        <ViewButton>
          <svg width="18" height="17" viewBox="0 0 18 17" fill="none" stroke="#dedede" strokeWidth="1.500"><path d="M.8.8h16.400v15.400H.8zM6 .8v8.700M.8 9.500h10.400M11.200.8v8.700" /></svg>
        </ViewButton>
        <Slot $w={10} $gap={7.500}><svg width="10" height="10" viewBox="0 0 10 10"><path d="M0 5h10" stroke="#e6e6e6" strokeWidth="1.200" /></svg></Slot>
        <ZoomTrack><ZoomThumb /></ZoomTrack>
        <Slot $w={10}><svg width="10" height="10" viewBox="0 0 10 10"><path d="M0 5h10M5 0v10" stroke="#e6e6e6" strokeWidth="1.200" /></svg></Slot>
        <Slot $w={36} $gap={16.500}><Label $size={12.600} $ls={-0.25}>100%</Label></Slot>
      </StatusBar>

      <Taskbar>
        <Sun />
        <TwoLines $w={100} $gap={12}>
          <Label $size={14.300}>84°F</Label>
          <Label $size={14.600} $color="#b4bdc0">Sunny</Label>
        </TwoLines>
        <Slot $w={29} $gap={311}>
          <svg width="29" height="29" viewBox="0 0 29 29">
            <defs><linearGradient id="win" gradientUnits="userSpaceOnUse" x1="0" y1="0" x2="29" y2="29"><stop offset="0" stopColor="#7cf0ff" /><stop offset=".5" stopColor="#43c3fa" /><stop offset="1" stopColor="#0c95f8" /></linearGradient></defs>
            <path d="M1 0h13v14H0V1zM15 0h13l1 1v13H15zM0 15h14v14H1l-1-1zM15 15h14v13l-1 1H15z" fill="url(#win)" />
          </svg>
        </Slot>
        <TaskSearch>
          <svg width="19" height="19" viewBox="0 0 19 19" fill="none" stroke="#e3e6e8" strokeWidth="2"><circle cx="8" cy="8" r="6.800" /><path d="M12.800 12.800l5 5" strokeLinecap="round" /></svg>
          <Slot $w={162} $gap={12}><Label $size={16} $color="#d0d5d7">Search</Label></Slot>
          <EarthSun />
        </TaskSearch>
        <AppRow>
          {apps.map((a, i) => (
            <AppSlot key={i} $active={a.active}>
              {a.icon}
              {a.running && <Indicator $active={a.active} />}
            </AppSlot>
          ))}
        </AppRow>
        <Slot $w={14} $gap={148}><Chevron w={14} up sw={1.800} /></Slot>
        <TwoLines $w={40} $gap={21} $align="center">
          <Label>ENG</Label>
          <Label>IN</Label>
        </TwoLines>
        <Slot $w={20} $gap={17}>
          <svg width="20" height="16" viewBox="0 0 20 16" fill="none" stroke="#fff" strokeWidth="1.400"><path d="M.6 6a13.300 13.300 0 0 1 18.800 0M3.400 8.800a9.300 9.300 0 0 1 13.200 0M6.200 11.500a5.400 5.400 0 0 1 7.600 0" /><circle cx="10" cy="14" r="1.700" fill="#fff" stroke="none" /></svg>
        </Slot>
        <Slot $w={20} $gap={10}>
          <svg width="20" height="18" viewBox="0 0 20 18" fill="none" stroke="#fff" strokeWidth="1.300" strokeLinejoin="round"><path d="M.7 6h3.500L9 1.700v14.600L4.200 12H.7z" /><path d="M11.300 6a4.500 4.500 0 0 1 0 6M13.800 3.700a7.600 7.600 0 0 1 0 10.600M16.300 1.300a11 11 0 0 1 0 15.400" strokeLinecap="round" /></svg>
        </Slot>
        <Slot $w={20} $gap={10}>
          <svg width="20" height="14" viewBox="0 0 20 14"><rect x=".7" y=".7" width="16.500" height="12.400" rx="2.600" fill="none" stroke="#fff" strokeWidth="1.400" /><rect x="3" y="3" width="6" height="7.800" rx="1" fill="#fff" /><path d="M18 4.300c1.300.2 2 1 2 2.600s-.7 2.500-2 2.600z" fill="#fff" /></svg>
        </Slot>
        <TwoLines $w={76} $gap={14} $align="flex-end">
          <Label $size={14.600}>11:57 AM</Label>
          <Label $size={14.400}>3/19/2024</Label>
        </TwoLines>
        <Slot $w={17} $gap={10.500}>
          <svg width="17" height="19" viewBox="0 0 17 19" fill="#9ce8ec"><path d="M8.500 0a6.300 6.300 0 0 1 6.300 6.300v4.400l2 3.600c.3.700 0 1.300-.8 1.300H1c-.8 0-1.100-.6-.8-1.300l2-3.600V6.300A6.300 6.300 0 0 1 8.500 0zM5.500 16.600h6a3 2.400 0 0 1-6 0z" /></svg>
        </Slot>
      </Taskbar>
    </Screen>
  );
}
